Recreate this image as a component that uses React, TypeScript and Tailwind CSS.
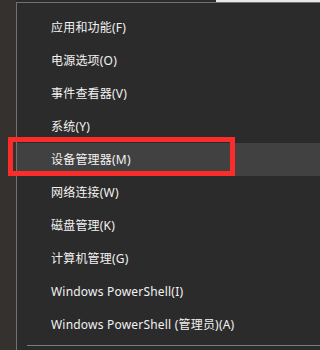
import React from "react";

const items = [
  "应用和功能(F)",
  "电源选项(O)",
  "事件查看器(V)",
  "系统(Y)",
  "设备管理器(M)",
  "网络连接(W)",
  "磁盘管理(K)",
  "计算机管理(G)",
  "Windows PowerShell(I)",
  "Windows PowerShell (管理员)(A)",
];

const App = () => {
  return (
    <div
      className="relative flex w-full min-w-[304px] h-[350px] overflow-hidden bg-[#35312e]"
      style={{ fontFamily: '"Noto Sans", "Noto Sans CJK SC", sans-serif' }}
    >
      <div className="w-4 shrink-0 bg-[#35312e]" />
      <div className="flex flex-1 flex-col">
        <div className="flex h-[2px] shrink-0">
          <div className="w-[200px] bg-[#2b2b2b]" />
          <div className="flex-1 bg-[#e9e9e9]" />
        </div>
        <div className="flex flex-1 flex-col border-l border-t border-[#727272] bg-[#2b2b2b] pt-2">
          {items.map((label, i) => (
            <div
              key={label}
              className={`flex h-[33px] shrink-0 items-center pl-[34px] text-[12px] tracking-[0.2px] text-[#f2f2f2] ${
                i === 4 ? "bg-[#414141]" : ""
              }`}
            >
              {label}
            </div>
          ))}
          <div className="ml-[10px] mt-1 h-px bg-[#7c7c7c]" />
        </div>
      </div>
      {/* red highlight frame */}
      <div className="absolute left-[8px] top-[137px] h-[39px] w-[227px] border-[5px] border-[#fb2d2a]" />
    </div>
  );
};

export default App;
